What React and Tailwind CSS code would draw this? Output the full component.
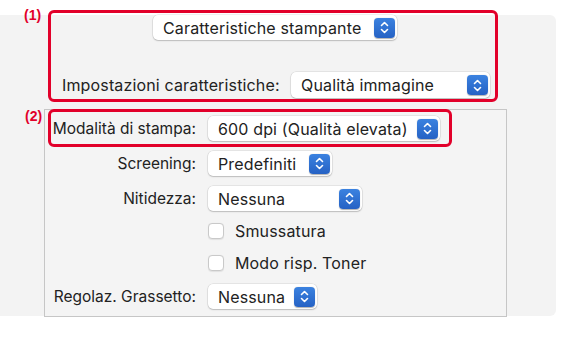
import React from 'react';

// blue up/down stepper of a macOS popup button
function Stepper() {
  return (
    <span className="flex h-[20px] w-[21px] items-center justify-center rounded-[4px] bg-gradient-to-b from-[#3b82e0] to-[#2662c4] shadow-[0_0.5px_1px_rgba(0,0,0,0.3)]">
      <svg width="9" height="13" viewBox="0 0 9 13" fill="none">
        <path d="M1.5 4.5 L4.5 1.5 L7.5 4.5" stroke="white" strokeWidth="1.6" strokeLinecap="round" strokeLinejoin="round" />
        <path d="M1.5 8.5 L4.5 11.5 L7.5 8.5" stroke="white" strokeWidth="1.6" strokeLinecap="round" strokeLinejoin="round" />
      </svg>
    </span>
  );
}

function Popup({ label, className = '' }) {
  return (
    <div
      className={`flex h-[25px] items-center justify-between rounded-[5px] bg-white pl-[10px] pr-[2px] shadow-[0_0_0_0.5px_rgba(0,0,0,0.12),0_1px_1.5px_rgba(0,0,0,0.18)] ${className}`}
    >
      <span className="whitespace-nowrap">{label}</span>
      <Stepper />
    </div>
  );
}

function Checkbox({ label }) {
  return (
    <div className="flex h-[24px] items-center gap-[11px]">
      <span className="h-[16px] w-[16px] rounded-[4px] border border-[#c9c9c9] bg-white shadow-[0_0.5px_1px_rgba(0,0,0,0.08)]" />
      <span>{label}</span>
    </div>
  );
}

function Row({ label, children, className = '' }) {
  return (
    <div className={`flex h-[25px] items-center ${className}`}>
      <div className="w-[152px] shrink-0 whitespace-nowrap pr-[1px] text-right text-[15.5px] tracking-[0px]">{label}</div>
      <div className="ml-[11px] flex">{children}</div>
    </div>
  );
}

export default function App() {
  return (
    <div className="relative h-[340px] w-[563px] overflow-hidden bg-white font-['Inter','Liberation_Sans',sans-serif] text-[16px] tracking-[0.15px] text-[#222222]">
      {/* Print dialog panel */}
      <div className="mt-[26px] h-[301px] w-[556px] rounded-r-[6px] bg-[#f3f3f3]">
        <div className="-mt-[11px] ml-[153px] flex">
          <Popup label="Caratteristiche stampante" className="w-[244px]" />
        </div>

        <div className="mt-[32px] flex h-[26px] items-center">
          <span className="ml-[62px] whitespace-nowrap">Impostazioni caratteristiche:</span>
          <Popup label="Qualità immagine" className="ml-auto mr-[66px] h-[26px] w-[199px]" />
        </div>

        <div className="ml-[44px] mt-[11px] h-[208px] w-[463px] border border-[#c6c6c6] bg-[#f4f4f4] pt-[6px]">
          <Row label="Modalità di stampa:">
            <Popup label="600 dpi (Qualità elevata)" className="w-[232px]" />
          </Row>
          <Row label="Screening:" className="mt-[10px]">
            <Popup label="Predefiniti" className="w-[124px]" />
          </Row>
          <Row label="Nitidezza:" className="mt-[10px]">
            <Popup label="Nessuna" className="w-[154px]" />
          </Row>
          <div className="ml-[163px] mt-[8px]">
            <Checkbox label="Smussatura" />
          </div>
          <div className="ml-[163px] mt-[8px]">
            <Checkbox label="Modo risp. Toner" />
          </div>
          <Row label="Regolaz. Grassetto:" className="mt-[9px]">
            <Popup label="Nessuna" className="w-[109px]" />
          </Row>
        </div>
      </div>

      {/* Annotation frames */}
      <div className="absolute left-[48px] top-[10px] h-[92px] w-[450px] rounded-[6px] border-[3px] border-[#e2002a]" />
      <div className="absolute left-[48px] top-[109px] h-[38px] w-[404px] rounded-[6px] border-[3px] border-[#e2002a]" />
      <span className="absolute left-[24px] top-[5px] font-['Liberation_Sans',sans-serif] text-[14px] font-bold tracking-normal text-[#e2002a]">(1)</span>
      <span className="absolute left-[25px] top-[106px] font-['Liberation_Sans',sans-serif] text-[14px] font-bold tracking-normal text-[#e2002a]">(2)</span>
    </div>
  );
}
